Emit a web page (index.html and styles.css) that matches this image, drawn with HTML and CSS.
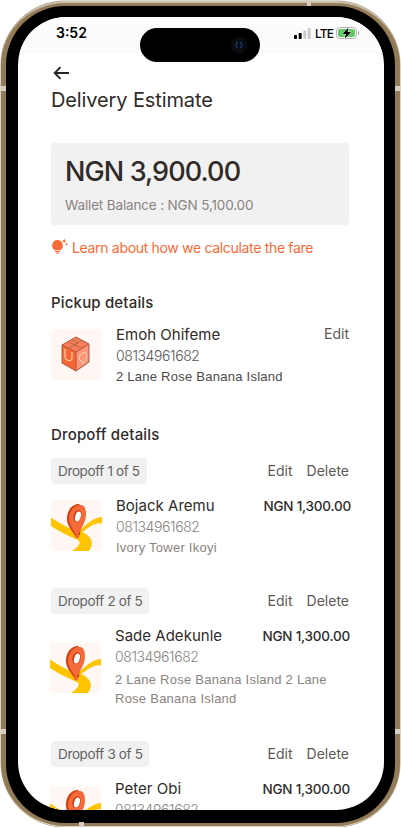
FILE: index.html
```html
<!DOCTYPE html>
<html lang="en">
<head>
<meta charset="utf-8">
<title>Delivery Estimate</title>
<link rel="stylesheet" href="styles.css">
</head>
<body>
<svg width="0" height="0" class="defs" aria-hidden="true">
  <symbol id="map-pin" viewBox="0 0 51 51">
    <rect width="51" height="51" fill="#fef7f3"/>
    <path d="M0 17.500C8 23 17 28 27 32C35 25 42 17.500 51 17V23.500C44 22 39 27 31 32C40 36 44 42 38 51H21C27 47 31 43 27 40C17 36 8 31 0 26Z" fill="#ffc400"/>
    <path d="M28 4C20 4 15.500 12 16 20C16.500 27 22 31 24.500 37L29 35L31 7Z" fill="#cf3f10"/>
    <path d="M30 5C22 4 18 13 18 19C18 26 24 31 26 37C29 30 35 23 35 14C35 8 33 5 30 5Z" fill="#f56a3a"/>
    <ellipse cx="26.500" cy="16" rx="4" ry="6" transform="rotate(18 26.500 16)" fill="#cf3f10"/>
    <ellipse cx="27" cy="16.500" rx="2.800" ry="5" transform="rotate(18 27 16.500)" fill="#fff"/>
    <circle cx="26" cy="36.500" r="2" fill="#f5643a"/>
  </symbol>
</svg>
<div class="phone">
  <i class="band band-tl"></i><i class="band band-tr"></i><i class="band band-bl"></i><i class="band band-br"></i><i class="band band-top"></i><i class="band band-bottom"></i>
  <div class="bezel">
    <main class="screen">
      <header class="status">
        <span class="time">3:52</span>
        <span class="island"><svg width="18" height="18" viewBox="0 0 18 18"><circle cx="9" cy="9" r="8.500" fill="#0a0b0e"/><path d="M7.500 5.800Q4.800 9 7.500 12M10.500 5.800Q13 9 10.500 12" fill="none" stroke="#17345e" stroke-width="1.700"/></svg></span>
        <span class="signals">
          <svg width="17" height="11" viewBox="0 0 17 11"><rect x="0" y="7" width="3" height="4" rx=".7"/><rect x="4.700" y="5" width="3" height="6" rx=".7"/><rect x="9.300" y="2.500" width="3" height="8.500" rx=".7" fill="#ccc"/><rect x="13.700" y="0" width="3" height="11" rx=".7" fill="#ccc"/></svg>
          <span class="lte">LTE</span>
          <svg width="24" height="12" viewBox="0 0 24 12"><rect x=".5" y=".5" width="20" height="11" rx="3.300" fill="#fff" stroke="#b4b4b4"/><rect x="2" y="2" width="17" height="8" rx="2" fill="#62c866"/><path d="M22 4V8Q23.300 7.300 23.300 6T22 4" fill="#aaa"/><path d="M12.500 .5L6.500 7H10L8.800 11.700L15 5H11.500Z" fill="#000" stroke="#fff" stroke-width=".8" paint-order="stroke"/></svg>
        </span>
      </header>
      <div class="content">
        <svg class="back" width="17" height="14" viewBox="0 0 17 14"><path d="M7.500 1.200L1.700 7L7.500 12.800M2 7H16" fill="none" stroke="#252323" stroke-width="1.900"/></svg>
        <h1>Delivery Estimate</h1>
        <section class="fare">
          <div class="amount">NGN 3,900.00</div>
          <div class="balance">Wallet Balance : NGN 5,100.00</div>
        </section>
        <a class="learn"><svg width="17" height="17" viewBox="0 0 17 17" fill="#fa6a37"><path d="M6.500 2A5.500 5.500 0 0 1 9.500 12H3.500A5.500 5.500 0 0 1 6.500 2ZM3.800 12.700H9.200V14H3.800ZM5 14.500H8Q7.500 16 6.500 16T5 14.500ZM13.200.5L13.900 2.300L15.500 3L13.900 3.700L13.200 5.300L12.500 3.700L11 3L12.500 2.300ZM15.500 4.700L16 5.700L17 6.200L16 6.700L15.500 7.700L15 6.700L14 6.200L15 5.700Z"/></svg><span>Learn about how we calculate the fare</span></a>
        <h2 class="pickup-title">Pickup details</h2>
        <section class="person pickup">
          <svg class="thumb" width="51" height="51" viewBox="0 0 51 51"><rect width="51" height="51" fill="#fef7f3"/><path d="M25 8L38 15V33L25 42L11 34V16Z" fill="#f96d3a"/><path d="M25 8L38 15L25 23L11 16Z" fill="#f77f58"/><path d="M25 23L38 15V33L25 42Z" fill="#ff9478"/><path d="M11 16V34L25 42V23Z" fill="#f76736"/><path d="M11 16L25 8L38 15V33L25 42L11 34ZM11 16L25 23L38 15M25 23V42" fill="none" stroke="#a5513c" stroke-width=".9"/><path d="M17 12.500L31 19.500M31 11.500L18 19M21 11L27 14L23 16L27 18" fill="none" stroke="#b36a45" stroke-width=".9"/><path d="M14 20V28Q14.500 31 17.500 31.500Q21 32 21 29V23" fill="none" stroke="#ffd0a8" stroke-width="1.200"/><path d="M32 24Q36 22 35.500 28Q34.500 33 31.500 35L31 32Q27.500 32 28 28Q29 25 32 24Z" fill="none" stroke="#ffd0bd" stroke-width="1"/></svg>
          <div class="info"><div class="name">Emoh Ohifeme</div><div class="phone-no">08134961682</div><div class="address">2 Lane Rose Banana Island</div></div>
          <span class="edit">Edit</span>
        </section>
        <h2 class="drop-title">Dropoff details</h2>

        <article class="drop drop-one">
          <div class="bar"><span class="tag t1">Dropoff 1 of 5</span><span class="edit">Edit</span><span class="delete">Delete</span></div>
          <div class="person"><svg class="thumb" width="51" height="51"><use href="#map-pin"/></svg>
          <div class="info"><div class="name">Bojack Aremu</div><div class="phone-no">08134961682</div><div class="address">Ivory Tower Ikoyi</div></div>
          <span class="price">NGN 1,300.00</span></div>
        </article>
        <article class="drop drop-two">
          <div class="bar"><span class="tag">Dropoff 2 of 5</span><span class="edit">Edit</span><span class="delete">Delete</span></div>
          <div class="person"><svg class="thumb" width="51" height="51"><use href="#map-pin"/></svg>
          <div class="info"><div class="name">Sade Adekunle</div><div class="phone-no">08134961682</div><div class="address">2 Lane Rose Banana Island 2 Lane<br>Rose Banana Island</div></div>
          <span class="price">NGN 1,300.00</span></div>
        </article>
        <article class="drop drop-three">
          <div class="bar"><span class="tag">Dropoff 3 of 5</span><span class="edit">Edit</span><span class="delete">Delete</span></div>
          <div class="person"><svg class="thumb" width="51" height="51"><use href="#map-pin"/></svg>
          <div class="info"><div class="name">Peter Obi</div><div class="phone-no">08134961682</div></div>
          <span class="price">NGN 1,300.00</span></div>
        </article>
      </div>
    </main>
  </div>
</div>
</body>
</html>
```
FILE: styles.css
```css
* { box-sizing: border-box; }
body { margin: 0; background: #fff; overflow: hidden; font-family: Inter, "Liberation Sans", sans-serif; color: #302b29; }
.defs { position: absolute; }
.phone { position: relative; width: 399px; height: 826px; margin: 1px 0 0 1px; padding: 5px 5px 4px; border-radius: 64px; background: #927b56; box-shadow: inset 0 3px 1px -1px #cfc5b6, inset 0 -2px 0 -1px #ddd2bd, 0 0 0 .5px #b5a78e; }
.bezel { width: 389px; height: 817px; padding: 11px 11px 13px 12px; background: #000; border-radius: 59px; }
.screen { height: 793px; border-radius: 48px; overflow: hidden; background: #fff; }
.band { position: absolute; background: #d6cec0; }
.band-tl, .band-bl { left: 0; width: 5px; height: 5px; }
.band-tr, .band-br { right: 0; width: 5px; height: 5px; }
.band-tl, .band-tr { top: 85px; }
.band-bl, .band-br { bottom: 93px; }
.band-top { left: 306px; top: 0; width: 4px; height: 5px; }
.band-bottom { left: 78px; bottom: 0; width: 5px; height: 5px; }
.status { position: relative; height: 36px; background: #fcfcfc; border-bottom: 1px solid #f8f8fb; display: flex; justify-content: space-between; padding: 6px 24px 0 38px; color: #000; }
.time { font-size: 14px; font-weight: 600; line-height: 20px; }
.signals { display: flex; align-items: center; height: 20px; gap: 4px; }
.lte { font-size: 12px; font-weight: 500; letter-spacing: -.9px; width: 17px; white-space: nowrap; }
.island { position: absolute; left: 122px; top: 11px; width: 120px; height: 34px; border-radius: 17px; background: #000; padding: 8px 12px 0 0; text-align: right; }
.content { padding: 13px 35px 0 33px; }
.back { display: block; margin-left: 2px; }
h1, h2 { margin: 0; font-weight: 500; white-space: nowrap; }
h1 { margin-top: 7px; font-size: 20px; line-height: 26px; letter-spacing: -.12px; font-weight: 400; }
.fare { width: 298px; height: 82px; margin-top: 30px; padding: 11px 14px; background: #f1f1f1; border-radius: 3px; white-space: nowrap; }
.amount { font-size: 27px; line-height: 36px; font-weight: 500; letter-spacing: -.9px; }
.balance { font-size: 13.5px; line-height: 20px; margin-top: 5px; color: #8b8380; letter-spacing: -.15px; }
.learn { display: flex; height: 20px; margin-top: 13px; color: #fa6a37; font-size: 14px; line-height: 20px; letter-spacing: -.32px; white-space: nowrap; gap: 4px; }
h2 { font-size: 15px; line-height: 20px; letter-spacing: .17px; }
.pickup-title { margin-top: 35px; }
.drop-title { margin-top: 29px; }
.person { display: flex; align-items: flex-start; position: relative; }
.pickup { height: 71px; margin-top: 12px; }
.thumb { flex: none; margin-top: 4px; border-radius: 4px; }
.info { margin-left: 14px; white-space: nowrap; }
.name { font-size: 15px; line-height: 20px; letter-spacing: .02px; font-weight: 400; }
.phone-no { font-size: 14px; line-height: 20px; margin-top: 1px; color: #595452; font-weight: 300; letter-spacing: -.4px; }
.address { font-family: "Liberation Sans", sans-serif; font-size: 13px; line-height: 19px; margin-top: 1px; color: #4e4947; letter-spacing: .25px; }
.edit, .delete, .price { color: #5e5957; font-size: 14px; line-height: 20px; white-space: nowrap; letter-spacing: 0; }
.pickup .edit { margin: -1px 0 0 auto; }
.bar { height: 26px; display: flex; align-items: center; }
.bar .edit { margin-left: auto; }
.delete { margin-left: 14px; }
.tag { width: 98px; height: 26px; padding: 3px 7px; border-radius: 4px; background: #f1f1f1; color: #656160; font-size: 13.5px; line-height: 20px; letter-spacing: -.36px; white-space: nowrap; }
.t1 { width: 96px; }
.drop-one { margin-top: 13px; height: 130px; }
.drop-two { height: 153px; }
.drop .person { margin-top: 12px; }
.drop .info { flex: none; width: 140px; }
.drop .phone-no, .drop .address { color: #8b8380; }
.drop .price { color: #302b29; font-weight: 500; margin: 0 -2px 0 auto; font-size: 13.5px; letter-spacing: -.22px; }
.drop-two .thumb, .drop-three .thumb { margin-left: -1px; }
.drop-two .thumb { margin-top: 16px; }
.drop-three .thumb { margin-top: 7px; }
.drop-two .person, .drop-three .person { margin-top: 12px; margin-right: 1px; }
.drop-two .address { margin-top: 3px; }
```
